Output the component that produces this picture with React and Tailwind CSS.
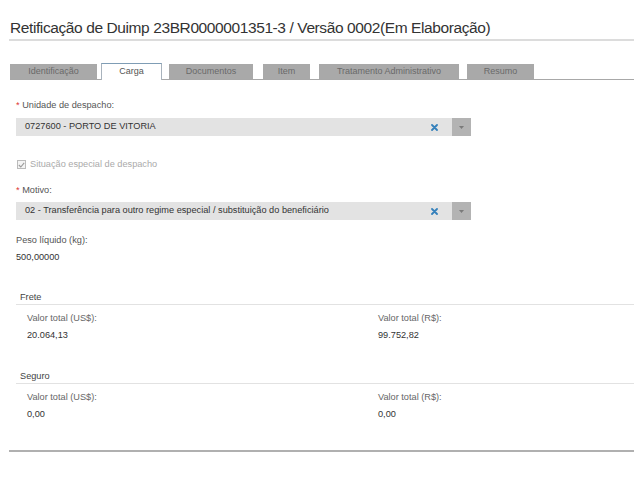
import React from 'react';

const tabs = [
  { label: 'Identificação', cls: 'w-[87px]' },
  { label: 'Carga', cls: 'ml-[4px] w-[61px]', active: true },
  { label: 'Documentos', cls: 'ml-[7px] w-[84px]' },
  { label: 'Item', cls: 'ml-[10px] w-[47px]' },
  { label: 'Tratamento Administrativo', cls: 'ml-[9px] w-[140px]' },
  { label: 'Resumo', cls: 'ml-[8px] w-[67px]' },
];

const Select = ({ value }) => (
  <div className="flex h-[18px] w-[455px] items-stretch bg-[#e3e3e3]">
    <div className="flex flex-1 items-center pl-[9px] text-[9.2px] text-[#333]">{value}</div>
    <div className="mr-[9px] flex w-[18px] items-center justify-center">
      <svg width="7" height="7" viewBox="0 0 7 7">
        <path d="M1 1 L6 6 M6 1 L1 6" stroke="#3480bb" strokeWidth="1.8" strokeLinecap="round" />
      </svg>
    </div>
    <div className="flex w-[19px] items-center justify-center bg-[#b3b3b3]">
      <svg width="5" height="3" viewBox="0 0 5 3">
        <path d="M0 0 L5 0 L2.5 3 Z" fill="#7a7a7a" />
      </svg>
    </div>
  </div>
);

const Label = ({ children, required }) => (
  <div className="text-[9.2px] leading-[9px] text-[#555]">
    {required && <span className="text-[#d33]">* </span>}
    {children}
  </div>
);

const Section = ({ title, usd, brl }) => (
  <div className="ml-[16px] leading-[9px]">
    <div className="border-b border-[#e2e2e2] pb-[2px] pl-[4px] text-[9.2px] text-[#444]">{title}</div>
    <div className="mt-[9px] grid grid-cols-[351px_1fr] pl-[11px] text-[9.2px]">
      <div>
        <div className="text-[#666]">Valor total (US$):</div>
        <div className="mt-[8px] text-[#333]">{usd}</div>
      </div>
      <div>
        <div className="text-[#666]">Valor total (R$):</div>
        <div className="mt-[8px] text-[#333]">{brl}</div>
      </div>
    </div>
  </div>
);

export default function App() {
  return (
    <div className="h-[486px] w-[634px] bg-white font-['Liberation_Sans',Arial,sans-serif]">
      <div className="pt-[18px] pl-[9px]">
        <h1 className="border-b-2 border-[#dcdcdc] pb-[2px] pl-[1px] text-[15.5px] leading-[19px] tracking-[-0.4px] text-[#333]">
          Retificação de Duimp 23BR0000001351-3 / Versão 0002(Em Elaboração)
        </h1>
      </div>

      <div className="ml-[10px] mt-[23px] flex h-[16px] items-end border-b border-[#a8a8a8]">
        {tabs.map((t) =>
          t.active ? (
            <div
              key={t.label}
              className={`${t.cls} -mb-[1px] flex h-[17px] items-center justify-center border border-b-0 border-[#a9b3bd] border-t-[#7f9db5] bg-white text-[9px] text-[#555]`}
            >
              {t.label}
            </div>
          ) : (
            <div
              key={t.label}
              className={`${t.cls} flex h-[15px] items-center justify-center bg-[#a9a9a9] text-[9px] text-[#6a6a6a]`}
            >
              {t.label}
            </div>
          )
        )}
      </div>

      <div className="ml-[16px] mt-[21px]">
        <Label required>Unidade de despacho:</Label>
        <div className="mt-[8px]">
          <Select value="0727600 - PORTO DE VITORIA" />
        </div>

        <div className="mt-[24px] flex items-center gap-[4px] pl-[1px] leading-[9px]">
          <div className="flex h-[9px] w-[9px] items-center justify-center border border-[#bbb] bg-[#f4f4f4]">
            <svg width="7" height="6" viewBox="0 0 7 6">
              <path d="M0.8 3 L2.8 5 L6.2 0.8" stroke="#9a9a9a" strokeWidth="1.1" fill="none" />
            </svg>
          </div>
          <span className="text-[9.2px] text-[#aaa]">Situação especial de despacho</span>
        </div>

        <div className="mt-[17px]">
          <Label required>Motivo:</Label>
        </div>
        <div className="mt-[7px]">
          <Select value="02 - Transferência para outro regime especial / substituição do beneficiário" />
        </div>

        <div className="mt-[16px] text-[9.2px] leading-[9px] text-[#555]">Peso líquido (kg):</div>
        <div className="mt-[8px] text-[9.2px] leading-[9px] text-[#333]">500,00000</div>
      </div>

      <div className="mt-[31px]">
        <Section title="Frete" usd="20.064,13" brl="99.752,82" />
      </div>
      <div className="mt-[32px]">
        <Section title="Seguro" usd="0,00" brl="0,00" />
      </div>

      <div className="ml-[9px] mt-[31px] border-b-2 border-[#b0b0b0]" />
    </div>
  );
}
